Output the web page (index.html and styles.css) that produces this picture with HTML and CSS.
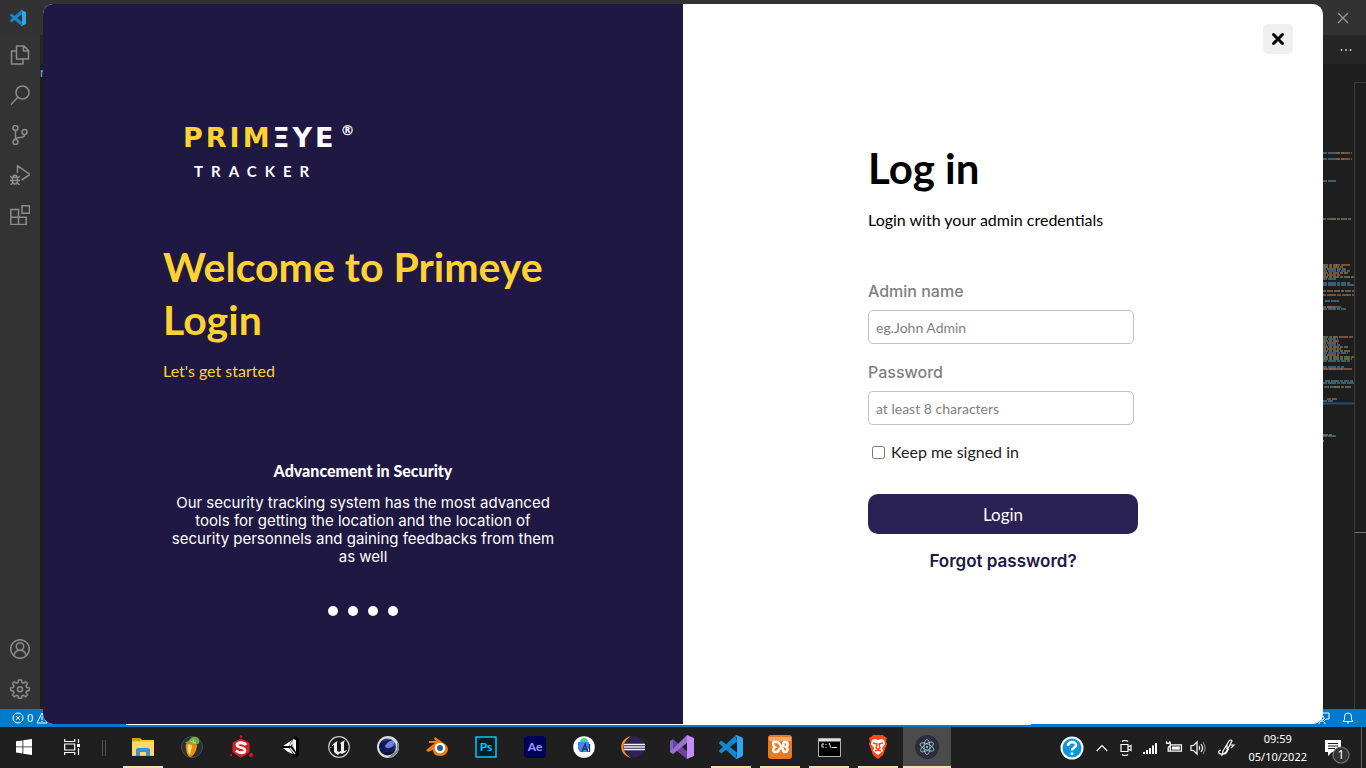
FILE: index.html
```html
<!DOCTYPE html>
<html lang="en">
<head>
<meta charset="utf-8">
<meta name="viewport" content="width=device-width, initial-scale=1">
<title>Primeye Tracker</title>
<link rel="stylesheet" href="styles.css">
</head>
<body>
<svg class="defs" width="0" height="0" aria-hidden="true">
  <symbol id="vscode" viewBox="0 0 24 24">
    <path fill="#1587d0" d="M16.500.5l-9.460 8.630-4.120-3.128a1 1 0 0 0-1.276.057L.327 7.261A1 1 0 0 0 .326 8.740L3.899 12 .326 15.260a1 1 0 0 0 0 1.479L1.650 17.940a1 1 0 0 0 1.276.057l4.120-3.128 9.460 8.630 1.500-6.050L10.826 12l7.178-5.448z"/>
    <path fill="#2ea5f0" d="M23.150 2.587L18.210.210a1.494 1.494 0 0 0-1.705.290L18.004 3v18l-1.498 2.500a1.492 1.492 0 0 0 1.704.290l4.942-2.377A1.500 1.500 0 0 0 24 20.060V3.939a1.500 1.500 0 0 0-.850-1.352z"/>
  </symbol>
</svg>
<div class="desktop">
  <div class="workspace">
    <header class="titlebar">
      <svg width="16" height="16"><use href="#vscode"/></svg>
      <button class="ghost" aria-label="Close editor"><svg width="12" height="12" viewBox="0 0 12 12"><path d="M1 1l10 10M11 1L1 11" stroke="#999" stroke-width="1.300"/></svg></button>
    </header>
    <div class="ide">
      <nav class="activity" aria-label="Activity bar">
        <button class="ghost" aria-label="Explorer"><svg viewBox="0 0 20 20"><path d="M6.500 1h7.500l4.500 4.500V14h-12zM13.500 1v5h5M6.500 6H1.500v13h11.500v-5"/></svg></button>
        <button class="ghost" aria-label="Search"><svg viewBox="0 0 20 20"><circle cx="12.500" cy="7.500" r="6.500"/><path d="M8 12L1 19.500"/></svg></button>
        <button class="ghost" aria-label="Source control"><svg viewBox="0 0 20 20"><circle cx="5.500" cy="3" r="2.500"/><circle cx="5.500" cy="17" r="2.500"/><circle cx="14.500" cy="7" r="2.500"/><path d="M5.500 5.500v9M14.500 9.500c0 2.500-2 3-4 3-3 0-5 0-5 2"/></svg></button>
        <button class="ghost" aria-label="Run and debug"><svg viewBox="0 0 20 20"><path d="M7.500 8V.8L20 9.500 11.500 15M2.500 12.500h5v4a2.500 2.500 0 0 1-5 0zM3 12.500c0-3 4-3 4 0M0 11l2.500 2M10 11l-2.500 2M0 15.500h10M.5 20l2-2M9.500 20l-2-2"/></svg></button>
        <button class="ghost" aria-label="Extensions"><svg viewBox="0 0 20 20"><path d="M.8 4.500h7.700v7.700h7.700v7.300H.8zM.8 12.200h7.700v7.300M12 .8h7.500v7.500H12z"/></svg></button>
        <span class="spacer"></span>
        <button class="ghost" aria-label="Account"><svg viewBox="0 0 20 20"><circle cx="10" cy="10" r="9.300"/><circle cx="10" cy="7.500" r="3.700"/><path d="M3.800 16.800c.7-3.600 3-5.600 6.200-5.600s5.500 2 6.200 5.600"/></svg></button>
        <button class="ghost" aria-label="Manage"><svg viewBox="0 0 20 20"><path d="M8.500 1h3l.5 2.600 1.400.6L15.600 2.700l1.900 2L16 6.900l.6 1.500 2.700.5v2.700l-2.700.5-.6 1.500 1.500 2.200-1.900 2-2.200-1.500-1.400.6-.5 2.400h-3L8 16.900l-1.400-.6-2.200 1.500-1.900-2L4 13.600l-.6-1.500-2.700-.5V8.900l2.700-.5L4 6.900 2.500 4.700l1.900-2 2.200 1.500L8 3.600z"/><circle cx="10" cy="10.200" r="2.500"/></svg></button>
      </nav>
      <div class="code">
        <div class="tabs"><button class="ghost" aria-label="More actions"><svg width="12" height="4" viewBox="0 0 12 4"><g fill="#c5c5c5"><circle cx="1.500" cy="2" r="1"/><circle cx="6" cy="2" r="1"/><circle cx="10.500" cy="2" r="1"/></g></svg></button></div>
        <div class="crumbs">n</div>
        <div class="pane">
          <svg class="minimap" width="32" height="400" viewBox="0 0 32 400" fill="none" stroke-width="1.500">
            <g stroke="#4c7f99" stroke-dasharray="5 1 8 1 3 1">
              <path d="M0 71h22M0 77h22M0 99h15M0 197h14M0 201h28M3 219h14M5 225h14M0 227h24M0 257h16M0 263h18M0 279h28M0 285h22M0 287h22M3 299h28M2 305h12M0 319h11M0 354h14M0 189h28M0 271h26M0 203h32M0 301h32"/>
            </g>
            <g stroke="#a4694f" stroke-dasharray="4 1 9 1">
              <path d="M14 71h16M14 77h16M0 137h8M14 183h14M0 187h24M0 193h18M0 209h11M0 213h32M0 225h13M12 255h20M0 261h16M0 267h20M0 273h17M2 287h28M5 317h10"/>
            </g>
            <g stroke="#81865c" stroke-dasharray="6 1 3 1">
              <path d="M8 137h22M0 183h15M0 185h22M0 191h26M0 195h32M12 209h20M0 255h13M0 259h18M0 265h26M0 269h28M0 275h32M0 277h30M12 305h18M0 353h10"/>
            </g>
            <path d="M0 321.500h32" stroke="#264f78" stroke-width="2"/>
            <path d="M0 359h2" stroke="#999"/>
          </svg>
          <div class="ruler"></div>
        </div>
      </div>
    </div>
    <footer class="status">
      <span class="problems">
        <svg width="12" height="12" viewBox="0 0 12 12"><circle cx="6" cy="6" r="5"/><path d="M4 4l4 4M8 4L4 8"/></svg>0
        <svg width="12" height="12" viewBox="0 0 12 12"><path d="M6 1l5 10H1zM6 4.500v3.500M6 9v1"/></svg>
      </span>
      <span class="notices">
        <svg width="12" height="12" viewBox="0 0 12 12"><path d="M1 1h10v6H8l-2 2M4 4a2 2 0 1 1 0 4 2 2 0 0 1 0-4M1 12c0-4 6-4 6 0"/></svg>
        <svg width="12" height="12" viewBox="0 0 12 12"><path d="M1 9.500h10L9.500 7.500V4.500a3.500 3.500 0 0 0-7 0v3zM5 11h2"/></svg>
      </span>
    </footer>

    <main class="window">
      <section class="welcome">
        <div class="brand" aria-label="Primeye Tracker">
          <div class="brand-name"><span class="gold">PRIM</span>ΞYE<span class="reg">®</span></div>
          <div class="brand-sub">TRACKER</div>
        </div>
        <h1>Welcome to Primeye Login</h1>
        <p class="lead">Let's get started</p>
        <div class="feature">
          <h2>Advancement in Security</h2>
          <p>Our security tracking system has the most advanced tools for getting the location and the location of security personnels and gaining feedbacks from them as well</p>
          <div class="dots"><i></i><i></i><i></i><i></i></div>
        </div>
      </section>
      <section class="login">
        <button class="close" aria-label="Close"><svg width="14" height="14" viewBox="0 0 14 14"><path d="M2.500 2.500l9 9M11.500 2.500l-9 9" stroke="#000" stroke-width="3" stroke-linecap="round"/></svg></button>
        <form class="form">
          <h1>Log in</h1>
          <p class="hint">Login with your admin credentials</p>
          <label class="label" for="admin">Admin name</label>
          <input class="field" id="admin" type="text" placeholder="eg.John Admin">
          <label class="label" for="pass">Password</label>
          <input class="field" id="pass" type="password" placeholder="at least 8 characters">
          <div class="keep"><input id="keep" type="checkbox"><label for="keep">Keep me signed in</label></div>
          <button class="submit" type="button">Login</button>
          <a class="forgot" href="#">Forgot password?</a>
        </form>
      </section>
    </main>
  </div>

  <footer class="taskbar">
    <button class="task" aria-label="Start"><svg width="16" height="16" viewBox="0 0 16 16" fill="#fff"><path d="M0 2.300L6.500 1.400v6.100H0zM7.300 1.300L16 0v7.500H7.300zM0 8.300h6.500v6.200L0 13.600zM7.300 8.300H16V16l-8.700-1.200z"/></svg></button>
    <button class="task" aria-label="Task view"><svg width="16" height="16" viewBox="0 0 16 16" fill="none" stroke="#fff" stroke-width="1.200"><path d="M.7 0v2.500h10V0M.7 5h10v6H.7zM.7 16v-2.500h10V16M14.500 0v4M14.500 9v7"/><path d="M13 5h3v3h-3z" fill="#fff" stroke="none"/></svg></button>
    <span class="divider"></span>
    <nav class="apps" aria-label="Apps">
      <button class="task open" aria-label="File Explorer"><svg width="22" height="20" viewBox="0 0 22 20"><path d="M0 1h8l2 2h12v16H0z" fill="#f8c93e"/><path d="M0 1h8l1.500 1.500L8 4H0z" fill="#dc9a0c"/><path d="M0 5h22v13H0z" fill="#ffd868"/><path d="M4 19v-7l2-1h10l2 1v7h-4v-4H8v4z" fill="#3b91d8"/></svg></button>
      <button class="task" aria-label="FL Studio"><svg width="22" height="22" viewBox="0 0 22 22"><circle cx="11" cy="11" r="10.500" fill="#263035" stroke="#435057"/><path d="M5 8c3-2 9-2 11 1 0 6-4 12-7 12-3-1-5-8-4-13z" fill="#f9860f"/><path d="M7 9c2-1 4 0 4 2l-2 8c-2-2-3-6-2-10z" fill="#ffe269"/><path d="M4 7c1-2 4-1 5-4 3-3 8-3 9 1 1 2 0 5-3 4l-2 2-2-3-3 1z" fill="#78a83b"/><path d="M9 5l6 2M12 3l1 5" stroke="#b9dc75"/></svg></button>
      <button class="task" aria-label="Substance"><svg width="24" height="24" viewBox="0 0 24 24"><path d="M12 5l7 3.500v8L12 21l-7-4.500v-8z" fill="#e11b26" stroke="#e11b26" stroke-width="3" stroke-linejoin="round"/><circle cx="12" cy="1.500" r="1.200" fill="#d61a24"/><circle cx="22" cy="20" r="2" fill="#d61a24"/><circle cx="2" cy="20" r="1" fill="#d61a24"/><path d="M17 10c-2-3-9-3-9 0 0 3 8 2 8 5.500 0 3-6 3-9 0" fill="none" stroke="#fff" stroke-width="2.800"/></svg></button>
      <button class="task" aria-label="Unity"><svg width="22" height="22" viewBox="0 0 22 22"><path d="M2 11L17 0l3 3v16l-3 3z" fill="#080808"/><path d="M4 10l9-6-3 6zM14 3l3 1v12l-3-5zM4 12h6l4 6-5-2z" fill="#fff"/><path d="M11 10l3-5v6M11 12l5 6" fill="none" stroke="#ddd" stroke-width="1.500"/></svg></button>
      <button class="task" aria-label="Unreal Engine"><svg width="22" height="22" viewBox="0 0 22 22"><circle cx="11" cy="11" r="10.300" fill="#171717" stroke="#c7c7c7" stroke-width="1.200"/><path d="M3 12c1-4 4-6 7-7-1 1-1 2-1 3v7l2 1 2-1V8l-1-1 5-3c-1 2-1 3-1 5v6l3-1c-1 2-3 3-5 4l-2-1-2 2c-2-1-3-2-4-3V9c-1 0-2 1-4 3z" fill="#eee"/></svg></button>
      <button class="task" aria-label="Cinema 4D"><svg width="22" height="22" viewBox="0 0 22 22"><defs><radialGradient id="c4d" cx=".65" cy=".3"><stop offset="0" stop-color="#bac8ff"/><stop offset=".5" stop-color="#3b54b1"/><stop offset="1" stop-color="#08143e"/></radialGradient></defs><circle cx="11" cy="11" r="11" fill="#d8dce2"/><path d="M20 4l2 7c0 6-5 11-11 11l9-8z" fill="#7e848d"/><circle cx="10.500" cy="11" r="8.500" fill="url(#c4d)"/><path d="M4 13c0-6 5-10 11-9l-6 8c3 1 6 0 9-3-1 7-11 10-14 4z" fill="#101c57"/><path d="M8 10c2-4 5-6 9-5 1 4-4 7-8 7z" fill="#7083d0"/></svg></button>
      <button class="task" aria-label="Blender"><svg width="24" height="20" viewBox="0 0 24 20"><path d="M1 13l9-7H4V4h7L9 2l1-2 10 7c6 5 2 12-5 12-5 0-7-3-7-6l-5 2z" fill="#ec7d13"/><circle cx="15" cy="11" r="5.300" fill="#fff"/><circle cx="15" cy="11" r="3" fill="#265b91"/></svg></button>
      <button class="task" aria-label="Photoshop"><svg width="22" height="22" viewBox="0 0 22 22"><path d="M1 1h20v20H1z" fill="#001d26" stroke="#00c8ff" stroke-width="1.500"/><text x="11" y="15" class="tile bold" fill="#00c8ff">Ps</text></svg></button>
      <button class="task" aria-label="After Effects"><svg width="22" height="22" viewBox="0 0 22 22"><rect width="22" height="22" rx="4" fill="#00005b"/><text x="11" y="15" class="tile bold" fill="#a09bff">Ae</text></svg></button>
      <button class="task" aria-label="Android Studio"><svg width="22" height="22" viewBox="0 0 22 22"><circle cx="11" cy="11" r="10.800" fill="#fff"/><path d="M7 6a4 4 0 0 1 8 0z" fill="#3ddc84"/><path d="M5 6h11v6l-2 4H7l-2-3z" fill="#4285f4"/><path d="M9 16l3-8 3 8M10 13h4M16.500 8v8" fill="none" stroke="#17364d" stroke-width="1.300"/></svg></button>
      <button class="task" aria-label="Eclipse"><svg width="24" height="22" viewBox="0 0 24 22"><path d="M10 0C-3 3-3 19 10 22-1 14 1 7 10 0z" fill="#f7941e"/><circle cx="13.500" cy="11" r="10.500" fill="#2c2255"/><path d="M3 8.500h21M3 11h21M3 13.500h21" stroke="#f3efff" stroke-width="1.400"/></svg></button>
      <button class="task" aria-label="Visual Studio"><svg width="24" height="24" viewBox="0 0 24 24"><path d="M0 6l3-2 15 13-1 7L3 13 0 16z" fill="#68449b"/><path d="M0 6l3-1v14l-3-2z" fill="#8661c5"/><path d="M0 17l17-17 1 7L3 19z" fill="#9a6fd4"/><path d="M17 0l7 3v18l-7 3z" fill="#c48df5"/></svg></button>
      <button class="task open" aria-label="Visual Studio Code"><svg width="24" height="24"><use href="#vscode"/></svg></button>
      <button class="task open" aria-label="XAMPP"><svg width="24" height="24" viewBox="0 0 24 24"><rect width="24" height="24" rx="3" fill="#e97822"/><path d="M1 2h22v4H1z" fill="#f6a666"/><path d="M6 7h3c3 0 2 4 5 4 4 0-1-4 3-4 4 0 3 4 1 5 3 2 1 5-1 5-4 0 0-4-4-4-3 0-1 4-5 4-4 0-3-4-1-5-3-2-2-5-1-5z" fill="#e97822" stroke="#fff" stroke-width="2.500"/></svg></button>
      <button class="task open" aria-label="Command Prompt"><svg width="23" height="19" viewBox="0 0 23 19"><path d="M.5.5h22v18H.5z" fill="#000" stroke="#aeb3b7"/><path d="M1 1h21v2.500H1z" fill="#dce1e4"/><path d="M6 6H4v3h2M8 6v1M8 9v1M11 5l2 5M14 9.500h5" fill="none" stroke="#eee"/></svg></button>
      <button class="task open" aria-label="Brave"><svg width="20" height="24" viewBox="0 0 20 24"><path d="M5 0h10l2 2 2 1-1 3 1 3-4 11-5 4-5-4L1 9l1-3-1-3 2-1z" fill="#ff4b18"/><path d="M4 5l3-1 3 1 3-1 3 1 1 4-3 4 1 3-5 4-5-4 1-3-3-4z" fill="#fff"/><path d="M5 8l4 1-1 4 2 1 2-1-1-4 4-1M7 16l3-1 3 1" fill="none" stroke="#f4481b" stroke-width="1.400"/></svg></button>
      <button class="task open active" aria-label="Electron"><svg width="24" height="24" viewBox="0 0 24 24"><circle cx="12" cy="12" r="12" fill="#2b2e3a"/><g fill="none" stroke="#9fcfd9" stroke-width=".8"><ellipse cx="12" cy="12" rx="7.500" ry="3" transform="rotate(25 12 12)"/><ellipse cx="12" cy="12" rx="7.500" ry="3" transform="rotate(-35 12 12)"/><ellipse cx="12" cy="12" rx="7.500" ry="3" transform="rotate(90 12 12)"/></g><circle cx="12" cy="12" r="1" fill="#9feaf9"/></svg></button>
    </nav>
    <div class="tray">
      <svg class="help" height="24" viewBox="0 0 24 24"><circle cx="12" cy="12" r="10.500" fill="#0d96d8" stroke="#fff" stroke-width="2"/><path d="M8 10c0-5 8-5 8-1 0 3-4 2.500-4 5.500M12 16.500v2.500" fill="none" stroke="#fff" stroke-width="2.600"/></svg>
      <svg height="16" viewBox="0 0 12 16"><path d="M.7 11L6 5.500l5.300 5.500"/></svg>
      <svg height="16" viewBox="0 0 12 16"><path d="M1 4.500h7v7H1zM8 7l3-1.500v5L8 9M2 1.500Q5-.5 8 1.500M2 14.500q3 2 6 0"/></svg>
      <svg height="16" viewBox="0 0 14 16"><path d="M1 14v-2M4 14v-4M7 14V8M10 14V5.500M13 14V3" stroke-width="2"/></svg>
      <svg height="17" viewBox="0 0 16 16"><path d="M4.500 5.500H15v6H4.500zM2.500 8v3.500h2M1 2v2M4 2v2M.5 4h4v2L2.500 8"/><path d="M6 7h7.500v3H6z" fill="#fff" stroke="none"/></svg>
      <svg height="16" viewBox="0 0 16 16"><path d="M1 5.500h2.500L7 2v12l-3.500-3.500H1zM9 6q1.500 2 0 4M11 4q3 4 0 8"/><path d="M13 2q4 6 0 12" stroke="#888"/></svg>
      <svg class="pen" height="18" viewBox="0 0 16 18"><path d="M5 12L11 2q2-2 3 0L8 13l-4 3zM3 11c-3 0-3 4 0 4h4c3-1 2-5 4-5M9 5v5M12 6h4l-3 3"/></svg>
      <time class="clock"><span>09:59</span><span>05/10/2022</span></time>
      <button class="ghost notify" aria-label="Notifications"><svg class="note" height="26" viewBox="0 0 26 26"><path d="M1 2h16v12H8l-4 4v-4H1z" fill="#fff" stroke="none"/><path d="M4 5.500h10M4 8h10M4 10.500h7" stroke="#1e1e1e"/><circle cx="17" cy="17" r="8" fill="#333" stroke="#777"/><text x="17" y="21" class="badge">1</text></svg></button>
      <span class="peek"></span>
    </div>
  </footer>
</div>
</body>
</html>
```

FILE: styles.css
```css
* { box-sizing: border-box; }
body { margin: 0; font-family: Lato, "Open Sans", sans-serif; color: #000; background: #1e1e1e; }
button { font: inherit; border: 0; padding: 0; cursor: pointer; }
h1, h2, p { margin: 0; }
svg { display: block; flex: none; }
.defs { position: absolute; }
.ghost { display: grid; place-items: center; background: none; }

.desktop { display: grid; grid-template-rows: 1fr 41px; min-height: 100vh; }
.workspace { position: relative; display: grid; grid-template-rows: 35px 1fr 18px; overflow: hidden; }

/* Editor behind the login window */
.titlebar { display: flex; align-items: center; justify-content: space-between; padding: 0 17px 0 10px; background: #323233; }
.ide { display: grid; grid-template-columns: 40px 1fr; }
.activity { display: flex; flex-direction: column; background: #333; }
.activity .ghost { height: 40px; }
.activity svg { width: 20px; height: 20px; fill: none; stroke: #8c8c8c; stroke-width: 1.500; }
.spacer { flex: 1; }
.code { display: grid; grid-template-rows: 29px 18px 1fr; background: #1e1e1e; }
.tabs { display: flex; justify-content: flex-end; padding-right: 14px; background: #252526; }
.crumbs { font: 12px/18px "Open Sans", sans-serif; color: #75beff; }
.pane { display: grid; grid-template-columns: 1fr 32px 12px; }
.minimap { grid-column: 2; opacity: .9; }
.ruler { border: solid #3c3c3c; border-width: 1px 0 0 1px; background: linear-gradient(#777, #777) 0 449px / 100% 1px no-repeat; }
.status { display: flex; align-items: center; justify-content: space-between; padding: 0 12px; background: linear-gradient(90deg, transparent 126px, #fff 126px 1031px, transparent 1031px) 0 15px / 100% 1px no-repeat #007acc; color: #fff; font: 11px/18px "Noto Sans", sans-serif; }
.status svg { fill: none; stroke: #fff; }
.problems { display: flex; align-items: center; gap: 3px; }
.notices { display: flex; gap: 12px; }

/* Login window */
.window { position: absolute; inset: 4px 43px 3px; display: grid; grid-template-columns: 1fr 1fr; border-radius: 10px; overflow: hidden; background: #fff; }
.welcome { padding: 116px 120px 0; background: #1e1843; color: #fff; }
.brand { padding-left: 20px; height: 120px; }
.brand-name { display: flex; font: bold 27px/36px "DejaVu Sans", sans-serif; letter-spacing: 3px; }
.gold { color: #ffd233; }
.reg { font-size: 14px; line-height: 20px; font-weight: 700; padding-left: 4px; }
.brand-sub { padding-left: 11px; font-size: 15px; line-height: 30px; font-weight: 700; letter-spacing: 8px; }
.welcome h1 { color: #ffd233; font-size: 41px; line-height: 53px; font-weight: 700; }
.lead { padding-top: 14px; color: #ffd233; font-size: 16px; line-height: 22px; }
.feature { padding-top: 79px; text-align: center; }
.feature h2 { font-size: 16px; line-height: 20px; font-weight: 900; }
.feature p { padding: 13px 6px 0; font: 15px/18px Inter, sans-serif; }
.dots { display: flex; justify-content: center; gap: 10px; padding-top: 40px; }
.dots i { width: 10px; height: 10px; border-radius: 50%; background: #fff; }

.login { position: relative; display: flex; justify-content: center; align-items: flex-start; padding-top: 138px; }
.close { position: absolute; top: 20px; right: 30px; display: grid; place-items: center; width: 30px; height: 30px; border-radius: 5px; background: #efefef; }
.form { display: flex; flex-direction: column; width: 270px; }
.form h1 { font-size: 42px; line-height: 53px; font-weight: 700; }
.hint { padding: 14px 0 48px; font-size: 16px; line-height: 22px; }
.label { font: 500 16px/24px Inter, sans-serif; color: #808080; }
.field { width: 266px; height: 34px; margin: 7px 0 16px; padding: 0 7px; border: 1px solid #c0c0c0; border-radius: 5px; background: #fff; font: 14px Lato, sans-serif; }
.field::placeholder { color: #808080; }
.keep { display: flex; align-items: center; gap: 6px; line-height: 22px; color: #222; }
.keep input { margin: 0 0 0 4px; width: 13px; height: 13px; }
.submit { height: 40px; margin-top: 31px; border-radius: 10px; background: #2a2255; color: #fff; font-size: 17px; }
.forgot { padding-top: 15px; text-align: center; font: 600 17px/24px Inter, sans-serif; color: #1e1843; text-decoration: none; }

/* Taskbar */
.taskbar { display: flex; background: #1f1f1f; color: #fff; }
.task { display: grid; place-items: center; width: 48px; background: none; border: solid transparent; border-width: 1px 4px 2px; padding: 0; }
.divider { width: 4px; margin: 13px 13px 12px 6px; border: solid #555; border-width: 0 1px; }
.apps { display: flex; gap: 1px; }
.open { background: linear-gradient(#ffd9ad, #ffd9ad) bottom / 40px 2px no-repeat border-box; }
.active { background: linear-gradient(#ffd9ad, #ffd9ad) bottom / 100% 2px no-repeat border-box #4b4b4b; }
.tile { font: 12px Lato, sans-serif; text-anchor: middle; }
.bold { font-weight: 700; }
.tray { display: flex; align-items: center; margin-left: auto; padding-right: 4px; }
.tray svg { width: 24px; fill: none; stroke: #fff; stroke-width: 1.200; }
.tray .help { margin-right: 6px; }
.tray .pen { margin: 0 10px 0 4px; }
.clock { display: grid; justify-items: center; font: 11px/18px "Noto Sans", sans-serif; }
.notify { margin: 6px 11px 0 17px; }
.tray .note { width: 26px; }
.badge { font: 12px "Noto Sans", sans-serif; text-anchor: middle; fill: #fff; stroke: none; }
.peek { width: 1px; height: 41px; background: #666; }
```
